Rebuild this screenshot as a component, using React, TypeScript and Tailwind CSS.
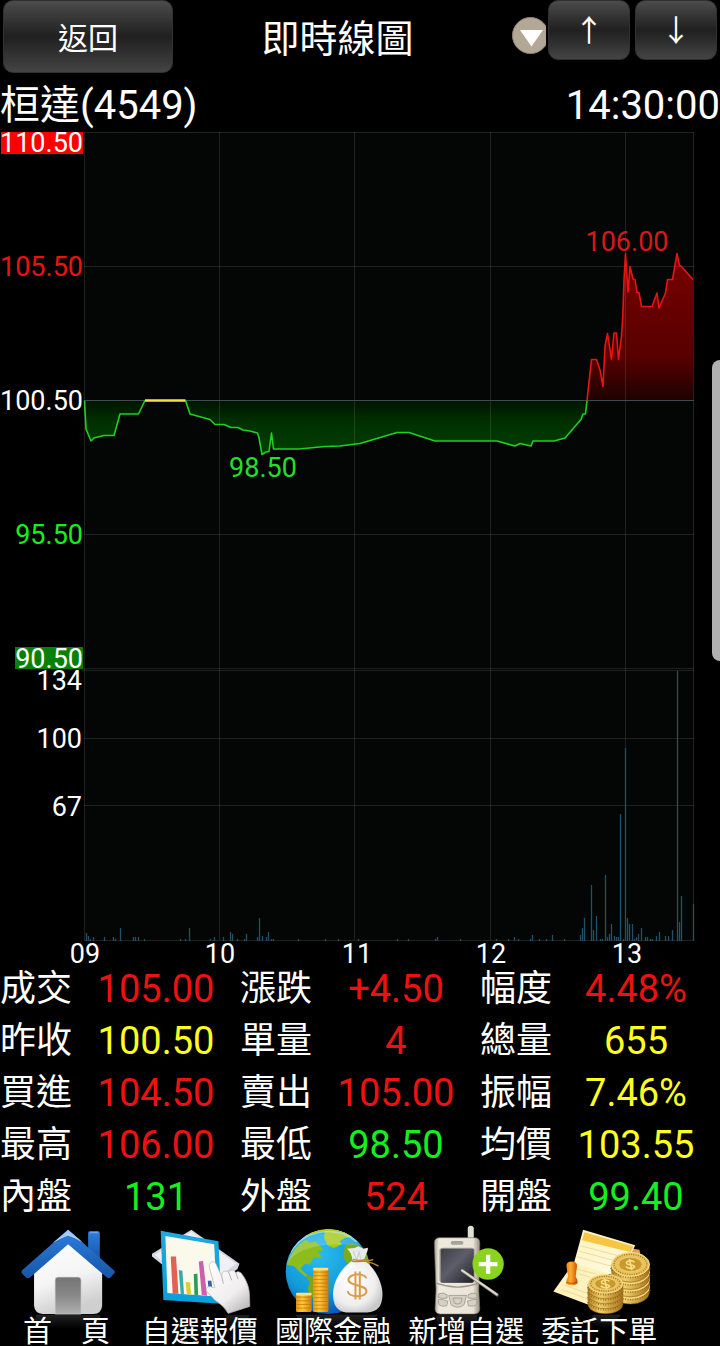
import type { ReactNode } from "react";

type Tone = "red" | "green" | "yellow";

const toneClass: Record<Tone, string> = {
  red: "text-[#ee1111]",
  green: "text-[#14f01e]",
  yellow: "text-[#ffff20]",
};

const quoteRows: { label: string; value: string; tone: Tone }[][] = [
  [
    { label: "成交", value: "105.00", tone: "red" },
    { label: "漲跌", value: "+4.50", tone: "red" },
    { label: "幅度", value: "4.48%", tone: "red" },
  ],
  [
    { label: "昨收", value: "100.50", tone: "yellow" },
    { label: "單量", value: "4", tone: "red" },
    { label: "總量", value: "655", tone: "yellow" },
  ],
  [
    { label: "買進", value: "104.50", tone: "red" },
    { label: "賣出", value: "105.00", tone: "red" },
    { label: "振幅", value: "7.46%", tone: "yellow" },
  ],
  [
    { label: "最高", value: "106.00", tone: "red" },
    { label: "最低", value: "98.50", tone: "green" },
    { label: "均價", value: "103.55", tone: "yellow" },
  ],
  [
    { label: "內盤", value: "131", tone: "green" },
    { label: "外盤", value: "524", tone: "red" },
    { label: "開盤", value: "99.40", tone: "green" },
  ],
];

// Trace of the day, split where the price crosses the previous close.
const morningLow =
  "84.5,400.5 86,429 91,441 94,438 104,435.5 114,435.5 120,414 138.5,414 145,400.5";
const flat = "145,400.5 185.5,400.5";
const daytimeLow =
  "185.5,400.5 190,414 210,419.5 215,424.5 224,424.5 231,427.5 238,427.5 243,430 250,431 257.5,433 259,438 262,454.5 266,452 269,451.5 271.5,433 273.5,449 299,449 325,446.5 340,446 360,443.5 397,432.5 409,432.5 435,441 497,441 515,446 520,443.5 531,446 533,441 554,441 565,438 581,419.5 583,414 585.5,414 587,400.5";
const rally =
  "587,400.5 591.5,359.5 596.5,359.5 600,370 603,386.5 605,346 607.5,333.5 611.5,359.5 614,333 616.5,333 618.5,359.5 621.5,336 622.8,316 624,280 625.5,253.5 628,292 630,266.5 633,279 635,279.5 637,292.5 639,292.5 641.5,306.5 652,306.5 657,293 659,308 665.5,293 667.5,279.5 672.5,279.5 677,253.5 679.5,265.5 681.5,266.5 693,279.5";

const volumes: [number, number][] = [
  [86.5, 8], [88.5, 5], [90.5, 2], [93.5, 4], [104.5, 4], [113.5, 4], [115.5, 2],
  [120.5, 13], [133.5, 4], [135.5, 4], [138.5, 4], [144.5, 2], [180.5, 2],
  [185.5, 2], [189.5, 13], [210.5, 2], [214.5, 4], [223.5, 4], [230.5, 9],
  [232.5, 7], [237.5, 2], [244.5, 2], [246.5, 7], [257.5, 4], [259.5, 23],
  [262.5, 5], [266.5, 4], [268.5, 9], [271.5, 2], [273.5, 2], [298.5, 2],
  [325.5, 2], [338.5, 2], [358.5, 2], [397.5, 2], [408.5, 2], [435.5, 2],
  [437.5, 4], [460.5, 2], [496.5, 2], [508.5, 2], [514.5, 4], [518.5, 2],
  [530.5, 2], [532.5, 6], [539.5, 2], [546.5, 2], [552.5, 6], [564.5, 2],
  [580.5, 6], [582.5, 13], [584.5, 23], [591.5, 56], [593.5, 11], [596.5, 25],
  [600.5, 2], [602.5, 2], [605.5, 66], [607.5, 4], [609.5, 7], [611.5, 17],
  [614.5, 5], [616.5, 4], [618.5, 4], [620.5, 127], [623.5, 2], [625.5, 193],
  [627.5, 23], [629.5, 17], [632.5, 17], [634.5, 2], [636.5, 4], [638.5, 7],
  [641.5, 13], [645.5, 4], [647.5, 4], [650.5, 2], [652.5, 2], [656.5, 5],
  [659.5, 9], [665.5, 5], [668.5, 5], [672.5, 11], [677.5, 270], [679.5, 19],
  [681.5, 45], [693.5, 37],
];

function QuoteChart() {
  return (
    <svg
      viewBox="0 131 720 832"
      className="block w-full overflow-visible"
      role="img"
      aria-label="即時線圖"
      fontSize="27"
      fill="#ffffff"
    >
      <defs>
        <linearGradient id="down" gradientUnits="userSpaceOnUse" x1="0" y1="400" x2="0" y2="455">
          <stop offset="0" stopColor="#001200" />
          <stop offset="0.4" stopColor="#003000" />
          <stop offset="1" stopColor="#004000" />
        </linearGradient>
        <linearGradient id="up" gradientUnits="userSpaceOnUse" x1="0" y1="253" x2="0" y2="401">
          <stop offset="0" stopColor="#780000" />
          <stop offset="0.7" stopColor="#580000" />
          <stop offset="1" stopColor="#1c0202" />
        </linearGradient>
      </defs>
      <rect x="84" y="132" width="610" height="809" fill="#030605" />
      <polygon points={morningLow} fill="url(#down)" />
      <polygon points={daytimeLow} fill="url(#down)" />
      <polygon points={rally + " 693,400.5"} fill="url(#up)" />
      <g stroke="#ffffff" strokeOpacity="0.11" fill="none">
        <path d="M84 132.5H694M84 266.5H694M84 534.5H694M84 668.5H694M84 670.5H694M84 738.5H694M84 805.5H694M84 940.5H694" />
        <path d="M84.5 132V940M219.5 132V940M354.5 132V940M490.5 132V940M625.5 132V940M693.5 132V940" />
      </g>
      <path d="M84 400.5H694" stroke="#3d4c52" />
      <g stroke="#20506a" strokeWidth="1.3">
        {volumes.map(([x, h]) => (
          <line key={x} x1={x} x2={x} y1={941} y2={941 - h} />
        ))}
      </g>
      <g fill="none" strokeWidth="1.6" strokeLinejoin="round">
        <polyline points={morningLow} stroke="#1fd024" />
        <polyline points={daytimeLow} stroke="#1fd024" />
        <polyline points={rally} stroke="#e81414" />
        <polyline points={flat} stroke="#f2e33a" strokeWidth="2.4" />
      </g>
      <rect x="1" y="132" width="82" height="22" fill="#ff0000" />
      <rect x="15" y="647" width="68" height="22" fill="#078007" />
      <g textAnchor="end">
        <text x="83" y="152">110.50</text>
        <text x="83" y="276" fill="#ee1111">105.50</text>
        <text x="83" y="410">100.50</text>
        <text x="83" y="544" fill="#14f01e">95.50</text>
        <text x="83" y="668">90.50</text>
        <text x="82" y="690">134</text>
        <text x="82" y="748">100</text>
        <text x="82" y="816">67</text>
      </g>
      <g textAnchor="middle">
        <text x="263" y="477" fill="#22e02a">98.50</text>
        <text x="627" y="251" fill="#d81818">106.00</text>
        <text x="85" y="963">09</text>
        <text x="220" y="963">10</text>
        <text x="357" y="963">11</text>
        <text x="491" y="963">12</text>
        <text x="627" y="963">13</text>
      </g>
    </svg>
  );
}

function HomeIcon() {
  return (
    <>
      <defs>
        <linearGradient id="shade" gradientUnits="userSpaceOnUse" x1="0" y1="297" x2="0" y2="340">
          <stop offset="0" stopColor="#242424" />
          <stop offset="1" stopColor="#000000" />
        </linearGradient>
        <linearGradient id="wall" x1="0" y1="0" x2="0.3" y2="1">
          <stop offset="0" stopColor="#ffffff" />
          <stop offset="0.6" stopColor="#f4f4f4" />
          <stop offset="1" stopColor="#cfcfcf" />
        </linearGradient>
        <linearGradient id="roof" x1="0" y1="0" x2="0" y2="1">
          <stop offset="0" stopColor="#2f7de0" />
          <stop offset="1" stopColor="#1556a6" />
        </linearGradient>
        <linearGradient id="door" x1="0" y1="0" x2="0" y2="1">
          <stop offset="0" stopColor="#747474" />
          <stop offset="0.5" stopColor="#888888" />
          <stop offset="1" stopColor="#b0b0b0" />
        </linearGradient>
      </defs>
      <path d="M108 299H300L304 318Q260 345 204 345Q150 345 104 318Z" fill="url(#shade)" />
      <path d="M264 55Q264 48 272 48H292Q299 48 299 55V135L264 105Z" fill="url(#roof)" />
      <path d="M268 55Q268 51 273 51H291Q296 51 296 55Z" fill="#69a7ea" />
      <path d="M204 78L306 170V272Q304 296 280 297H128Q104 295 102 272V170Z" fill="url(#wall)" />
      <path d="M204 44L342 166Q346 170 342 175L331 187Q326 192 320 187L204 88L90 187Q83 192 78 187L66 175Q62 170 67 165Z" fill="url(#roof)" />
      <path d="M204 44L246 80Q225 68 204 62Q184 68 158 84Z" fill="#9ccbf5" />
      <path d="M158 84Q184 66 204 58Q225 66 250 84L204 56Z" fill="#d7ebfb" />
      <path d="M165 297V195Q165 186 174 186H234Q243 186 243 195V297Z" fill="url(#door)" stroke="#d8d8d8" strokeWidth="2" />
    </>
  );
}

function WatchlistIcon() {
  return (
    <>
      <defs>
        <linearGradient id="frame" x1="0" y1="0" x2="0" y2="1">
          <stop offset="0" stopColor="#22a8df" />
          <stop offset="1" stopColor="#08a0dc" />
        </linearGradient>
        <linearGradient id="hand" x1="0" y1="0" x2="0.7" y2="1">
          <stop offset="0" stopColor="#ffffff" />
          <stop offset="0.7" stopColor="#f0eeee" />
          <stop offset="1" stopColor="#c2c0c0" />
        </linearGradient>
      </defs>
      <path d="M676 300H748L735 325L692 345Z" fill="url(#shade)" />
      <path d="M574 44L718 146L712 162L600 240L456 124V116Z" fill="#d5d8e2" />
      <path d="M574 50L708 146L600 226L464 120Z" fill="#eef0f5" />
      <path d="M482 47L655 79L664 266L490 255Z" fill="url(#frame)" />
      <path d="M496 63L642 88L651 244L502 234Z" fill="#fbf8ec" />
      <path d="M512 124H528L535 236L518 237Z" fill="#de6256" />
      <path d="M536 165L547 167L552 238H542Z" fill="#3ba9a7" />
      <path d="M557 200L570 202L573 238L560 237Z" fill="#dfce26" />
      <path d="M581 177L592 176L594 241L583 239Z" fill="#2d9d55" />
      <path d="M596 139L609 138L621 242L605 240Z" fill="#cf5eaf" />
      <path d="M623 197H634L638 240L627 238Z" fill="#365fa9" />
      <path
        d="M628 158C624 143 638 134 647 145L665 185C662 171 676 162 686 173C689 163 703 163 707 173C711 167 722 170 726 178C734 188 747 211 748 238L749 274L684 295C674 276 656 263 643 254C633 241 622 234 619 226C616 216 628 211 637 217L644 217Z"
        fill="url(#hand)"
        stroke="#b4b0b0"
        strokeWidth="2"
      />
      <path d="M665 185L670 206M686 173L695 196M707 173L714 192" stroke="#a9a5a5" strokeWidth="2.5" fill="none" />
    </>
  );
}

function WorldFinanceIcon() {
  return (
    <>
      <defs>
        <radialGradient id="sea" cx="0.4" cy="0.3" r="0.75">
          <stop offset="0" stopColor="#2abcec" />
          <stop offset="0.6" stopColor="#129bd8" />
          <stop offset="1" stopColor="#0b4fb0" />
        </radialGradient>
        <linearGradient id="gold" x1="0" y1="0" x2="1" y2="0">
          <stop offset="0" stopColor="#e89a10" />
          <stop offset="0.4" stopColor="#ffc93a" />
          <stop offset="1" stopColor="#d07c08" />
        </linearGradient>
        <radialGradient id="bag" cx="0.4" cy="0.4" r="0.65">
          <stop offset="0" stopColor="#ffffff" />
          <stop offset="0.7" stopColor="#eeeeee" />
          <stop offset="1" stopColor="#c8c8c8" />
        </radialGradient>
        <clipPath id="globe">
          <circle cx="189" cy="170" r="127" />
        </clipPath>
      </defs>
      <path d="M90 299H340Q310 328 260 326Q210 345 150 340Q110 330 90 299Z" fill="url(#shade)" />
      <circle cx="189" cy="170" r="127" fill="url(#sea)" />
      <g clipPath="url(#globe)">
        <path d="M66 150Q80 98 123 74L134 83L150 79L164 92L176 105L158 110L170 127L146 128L134 148L120 146L107 160L114 169L128 180L122 186L100 166L86 153Z" fill="#8dbd1c" />
        <path d="M180 40Q230 35 260 65L240 68L224 78L230 88L207 99L188 92L177 69Z" fill="#a4c91c" />
        <path d="M122 181L145 184L174 207L188 224L177 247L164 264L153 291L143 249L127 223L134 202Z" fill="#86a317" />
        <path d="M240 90Q286 76 320 130L310 190L270 145L244 143L234 124Z" fill="#7cab19" />
        <path d="M62 170C70 110 140 78 290 92C255 35 180 30 130 57C80 85 61 130 62 170Z" fill="#ffffff" opacity="0.18" />
        <path d="M75 110C120 38 220 28 276 79" fill="none" stroke="#b9e9ef" strokeWidth="9" opacity="0.65" />
        <path d="M118 60Q190 28 252 56" fill="none" stroke="#b4cf1e" strokeWidth="10" />
      </g>
      <rect x="144" y="159" width="46" height="132" rx="4" fill="url(#gold)" />
      <path d="M144 171H190M144 182H190M144 193H190M144 204H190M144 215H190M144 226H190M144 237H190M144 248H190M144 259H190M144 270H190M144 281H190" stroke="#b87408" strokeWidth="2" />
      <rect x="144" y="158" width="46" height="8" rx="4" fill="#ffe07a" />
      <rect x="93" y="234" width="47" height="57" rx="4" fill="url(#gold)" />
      <path d="M93 246H140M93 257H140M93 268H140M93 279H140" stroke="#b87408" strokeWidth="2" />
      <rect x="93" y="233" width="47" height="8" rx="4" fill="#ffe07a" />
      <path d="M262 137C261 120 255 108 245 101L268 99L280 94L294 101L308 98C310 108 300 119 296 139Z" fill="#e9e9e9" />
      <path d="M264 108L275 134L282 111L287 134" stroke="#cdcdcd" strokeWidth="3" fill="none" />
      <path d="M260 138H299C330 158 353 205 352 240C351 274 337 291 306 292H243C213 288 203 266 204 233C206 192 232 157 260 138Z" fill="url(#bag)" />
      <path d="M215 205C223 172 247 148 270 143C250 169 238 185 215 205Z" fill="#ffffff" />
      <path d="M260 138C280 143 304 137 324 134M296 138C312 140 327 145 340 153M263 133C280 138 291 137 302 132" stroke="#b8863c" strokeWidth="4" fill="none" />
      <path d="M303 190C301 174 254 174 250 193C248 214 305 207 304 229C302 249 250 248 248 228M271 169V253M284 169V253" fill="none" stroke="#d99c4b" strokeWidth="6" />
    </>
  );
}

function PhoneAddIcon() {
  return (
    <>
      <defs>
        <linearGradient id="phone" x1="0" y1="0" x2="1" y2="0">
          <stop offset="0" stopColor="#a9a294" />
          <stop offset="0.1" stopColor="#eeeade" />
          <stop offset="0.85" stopColor="#e9e4d6" />
          <stop offset="1" stopColor="#999080" />
        </linearGradient>
        <linearGradient id="screen" x1="0" y1="0" x2="1" y2="1">
          <stop offset="0" stopColor="#3e3e46" />
          <stop offset="0.45" stopColor="#5d5e6a" />
          <stop offset="1" stopColor="#1d1d22" />
        </linearGradient>
      </defs>
      <path d="M512 300H634V330Q574 345 512 330Z" fill="url(#shade)" />
      <path d="M605 76V40Q605 32 614 32Q623 32 623 40V76Z" fill="#e3dfd3" />
      <path d="M505 84Q505 68 522 68H625Q641 68 641 84L638 225L641 282Q640 296 626 297H522Q508 296 507 282L510 225Z" fill="url(#phone)" stroke="#77716a" strokeWidth="2" />
      <rect x="554" y="78" width="38" height="11" rx="5" fill="#a8a39a" />
      <path d="M520 106Q520 98 529 98H617Q626 98 626 106V195Q625 204 616 204H530Q521 204 520 195Z" fill="#a6a198" />
      <rect x="524" y="101" width="99" height="102" rx="5" fill="url(#screen)" />
      <path d="M513 205Q574 227 636 205" fill="none" stroke="#9d968b" strokeWidth="4" />
      <g fill="#d6d0c4" stroke="#918a7e" strokeWidth="2">
        <path d="M518 236Q532 230 543 239V249Q526 252 516 247Z" />
        <path d="M517 253Q530 252 545 258L542 272Q525 276 517 267Z" />
        <path d="M631 236Q617 230 606 239V249Q623 252 633 247Z" />
        <path d="M632 253Q619 252 604 258L607 272Q624 276 632 267Z" />
        <path d="M548 241H601L594 269Q574 284 555 269Z" />
        <path d="M561 249H588L584 264Q574 270 565 264Z" />
      </g>
      <path d="M589 167L693 240" stroke="#777268" strokeWidth="9" strokeLinecap="round" />
      <path d="M588 166L692 238" stroke="#ded9cb" strokeWidth="6" strokeLinecap="round" />
      <circle cx="666" cy="147" r="47" fill="#8bd31c" />
      <path d="M666 119V176M638 147H694" stroke="#ffffff" strokeWidth="13" />
    </>
  );
}

function CoinStack({ x, y, rx, ry, step, count }: { x: number; y: number; rx: number; ry: number; step: number; count: number }) {
  const levels = Array.from({ length: count }, (_, i) => count - 1 - i);
  return (
    <g>
      {levels.map((i) => (
        <g key={i}>
          <path
            d={`M${x - rx} ${y + i * step}V${y + i * step + 17}A${rx} ${ry} 0 0 0 ${x + rx} ${y + i * step + 17}V${y + i * step}Z`}
            fill="url(#coinEdge)"
            stroke="#7c5510"
            strokeWidth="1.5"
          />
          <path
            d={`M${x - rx + 2} ${y + i * step + 9}A${rx} ${ry} 0 0 0 ${x + rx - 2} ${y + i * step + 9}`}
            fill="none"
            stroke="#926614"
            strokeWidth="13"
            strokeDasharray="2 5"
          />
          <ellipse cx={x} cy={y + i * step} rx={rx} ry={ry} fill="#e9c35c" stroke="#f8e3a0" strokeWidth="2.5" />
        </g>
      ))}
      <ellipse cx={x} cy={y} rx={rx - 8} ry={ry - 6} fill="none" stroke="#a47a22" strokeWidth="4" strokeDasharray="3 4" />
      <ellipse cx={x} cy={y} rx={rx * 0.62} ry={ry * 0.6} fill="#c9992d" stroke="#f6dd8d" strokeWidth="2" />
      <path
        d={`M${x + 12} ${y - 7}C${x + 3} ${y - 15} ${x - 16} ${y - 10} ${x - 11} ${y - 2}C${x - 6} ${y + 3} ${x + 13} ${y} ${x + 12} ${y + 8}C${x + 6} ${y + 15} ${x - 10} ${y + 12} ${x - 14} ${y + 6}M${x - 3} ${y - 16}L${x + 4} ${y + 17}`}
        stroke="#f7df85"
        strokeWidth="5"
        fill="none"
      />
    </g>
  );
}

function OrderIcon() {
  return (
    <>
      <defs>
        <linearGradient id="paper" x1="0" y1="0" x2="0.4" y2="1">
          <stop offset="0" stopColor="#fff3bc" />
          <stop offset="1" stopColor="#fff9dc" />
        </linearGradient>
        <linearGradient id="coinEdge" x1="0" y1="0" x2="1" y2="0">
          <stop offset="0" stopColor="#b98320" />
          <stop offset="0.35" stopColor="#f1cf68" />
          <stop offset="1" stopColor="#a8741a" />
        </linearGradient>
        <linearGradient id="stamp" x1="0" y1="0" x2="1" y2="0">
          <stop offset="0" stopColor="#ee860c" />
          <stop offset="0.4" stopColor="#ffac32" />
          <stop offset="1" stopColor="#c94f05" />
        </linearGradient>
      </defs>
      <path d="M185 299H270L240 330Q205 345 180 320Z" fill="url(#shade)" />
      <path d="M306 101L325 104L328 120H300Z" fill="#e99a54" />
      <path d="M129 142L240 165L180 272L67 229Z" fill="#fff2bd" />
      <path d="M156 44L312 91L270 188L129 143Z" fill="url(#paper)" />
      <path d="M160 52L307 94L299 112L153 76Z" fill="#f7c443" />
      <path d="M148 92L285 128M143 108L248 136M137 125L240 153M130 160L195 177M140 176L177 186M100 210L170 235M91 223L169 251" stroke="#dfcd8c" strokeWidth="2" />
      <path d="M106 152Q106 139 122 139Q138 139 138 152L134 184L139 195V205Q126 215 106 207V196L111 184Z" fill="url(#stamp)" />
      <path d="M106 201Q123 209 139 200" stroke="#b94b06" strokeWidth="3" fill="none" />
      <CoinStack x={298} y={148} rx={57} ry={36} step={22} count={4} />
      <CoinStack x={223} y={206} rx={52} ry={28} step={15} count={4} />
    </>
  );
}

const navItems: { label: string; viewBox: string; icon: ReactNode }[] = [
  { label: "首　頁", viewBox: "0 24 399 276", icon: <HomeIcon /> },
  { label: "自選報價", viewBox: "399 24 399 276", icon: <WatchlistIcon /> },
  { label: "國際金融", viewBox: "3 24 399 276", icon: <WorldFinanceIcon /> },
  { label: "新增自選", viewBox: "402 24 399 276", icon: <PhoneAddIcon /> },
  { label: "委託下單", viewBox: "6 24 399 276", icon: <OrderIcon /> },
];

const keyClass =
  "shrink-0 rounded-[10px] border border-[#303030] bg-linear-to-b from-[#4c4c4c] via-[#202020] to-[#444444] text-center";

export default function App() {
  return (
    <div className="relative w-full overflow-hidden bg-black font-['Roboto','Noto_Sans_CJK_TC',sans-serif] text-white">
      <header className="flex h-[81px] items-start px-[3px]">
        <button type="button" className={`${keyClass} h-[73px] w-[170px] pt-[3px] text-[30px]`}>
          返回
        </button>
        <h1 className="flex-1 pr-2.5 text-center text-[38px] leading-[78px]">即時線圖</h1>
        <button type="button" aria-label="選擇股票" className="mt-[17px] mr-0.5 h-[37px] w-[34px] shrink-0">
          <svg viewBox="0 0 34 37" className="block h-full w-full">
            <circle cx="18.5" cy="18.5" r="18" fill="#b3a896" stroke="#8f8473" />
            <path d="M8 13H31L19.5 29.5Z" fill="#ffffff" />
          </svg>
        </button>
        <div className="flex gap-[5px] font-['Noto_Sans_CJK_TC',sans-serif] text-[30px]">
          <button type="button" aria-label="上一檔" className={`${keyClass} h-[60px] w-[82px] pb-1`}>
            ↑
          </button>
          <button type="button" aria-label="下一檔" className={`${keyClass} h-[60px] w-[82px] pb-1`}>
            ↓
          </button>
        </div>
      </header>

      <div className="flex h-[50px] items-center justify-between text-[40px] leading-[50px]">
        <h2>桓達(4549)</h2>
        <time>14:30:00</time>
      </div>

      <QuoteChart />

      <table className="w-full table-fixed border-collapse">
        <colgroup>
          <col className="w-[10%]" />
          <col />
          <col className="w-[10%]" />
          <col />
          <col className="w-[10%]" />
          <col />
        </colgroup>
        <tbody>
          {quoteRows.map((row) => (
            <tr key={row[0].label}>
              {row.map((cell) => [
                <th key={cell.label} scope="row" className="p-0 text-left text-[36px] leading-[52px] font-normal whitespace-nowrap">
                  {cell.label}
                </th>,
                <td key={cell.label + "-value"} className={`p-0 text-center text-[38px] leading-[52px] ${toneClass[cell.tone]}`}>
                  {cell.value}
                </td>,
              ])}
            </tr>
          ))}
        </tbody>
      </table>

      <nav className="flex">
        {navItems.map((item) => (
          <a key={item.label} href="#" className="flex w-[18.5%] flex-col">
            <svg viewBox={item.viewBox} className="block w-full overflow-visible" aria-hidden="true">
              {item.icon}
            </svg>
            <span className="relative pt-[3px] text-center text-[29px] leading-7 whitespace-nowrap">{item.label}</span>
          </a>
        ))}
      </nav>

      <div className="absolute top-[360px] right-0 h-[301px] w-2 rounded-l-lg bg-[#b0b0b0]" />
    </div>
  );
}
